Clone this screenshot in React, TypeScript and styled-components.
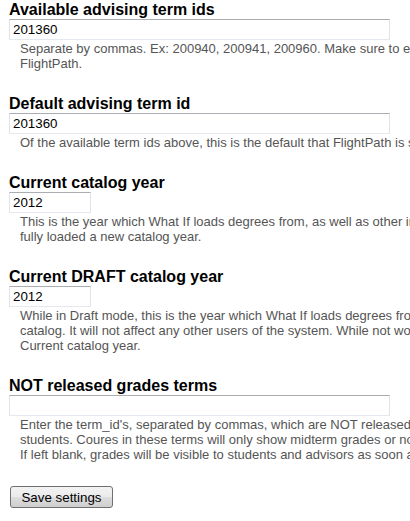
import React from "react";
import styled, { createGlobalStyle } from "styled-components";

const Global = createGlobalStyle`
  html, body { margin: 0; padding: 0; background: #fff; overflow: hidden; }
  body { font-family: "Liberation Sans", Arial, sans-serif; }
`;

const Page = styled.form`
  padding: 0 0 0 9px;
  width: 900px;
`;

const FormItem = styled.div`
  margin-bottom: 23px;
`;

const Label = styled.label`
  display: block;
  font-size: 16px;
  font-weight: bold;
  line-height: 19px;
  color: #000;
`;

const TextInput = styled.input<{ $w: number }>`
  display: block;
  box-sizing: border-box;
  width: ${(p) => p.$w}px;
  height: 21px;
  margin: 0;
  padding: 0 3px;
  border: 1px solid #e2e3ea;
  border-top-color: #abadb3;
  border-bottom-color: #e3e9ef;
  font-family: "Liberation Sans", Arial, sans-serif;
  font-size: 13.33px;
  color: #000;
  background: #fff;
  outline: none;
`;

const Description = styled.div`
  margin: 1px 0 0 11px;
  font-size: 13px;
  line-height: 15px;
  color: #555;
  white-space: nowrap;
`;

const SaveButton = styled.button`
  box-sizing: border-box;
  margin: 1px 0 0 1px;
  width: 103px;
  height: 22px;
  padding: 0;
  border: 1px solid #707070;
  border-radius: 3px;
  background: linear-gradient(#f2f2f2 0%, #ebebeb 50%, #dddddd 51%, #cfcfcf 100%);
  font-family: "Liberation Sans", Arial, sans-serif;
  font-size: 13.33px;
  color: #000;
`;

type Field = { label: string; value: string; width: number; lines: string[] };

const fields: Field[] = [
  {
    label: "Available advising term ids",
    value: "201360",
    width: 381,
    lines: [
      "Separate by commas. Ex: 200940, 200941, 200960. Make sure to enter them in order. These are the terms",
      "FlightPath.",
    ],
  },
  {
    label: "Default advising term id",
    value: "201360",
    width: 381,
    lines: ["Of the available term ids above, this is the default that FlightPath is set to."],
  },
  {
    label: "Current catalog year",
    value: "2012",
    width: 82,
    lines: [
      "This is the year which What If loads degrees from, as well as other important functions. Only change this once you have",
      "fully loaded a new catalog year.",
    ],
  },
  {
    label: "Current DRAFT catalog year",
    value: "2012",
    width: 82,
    lines: [
      "While in Draft mode, this is the year which What If loads degrees from, as well as other functions, for the draft",
      "catalog. It will not affect any other users of the system. While not working on a new catalog, this should match the",
      "Current catalog year.",
    ],
  },
  {
    label: "NOT released grades terms",
    value: "",
    width: 381,
    lines: [
      "Enter the term_id's, separated by commas, which are NOT released for viewing by advisors and",
      "students. Coures in these terms will only show midterm grades or no grades at all.",
      "If left blank, grades will be visible to students and advisors as soon as they are loaded.",
    ],
  },
];

export default function App() {
  return (
    <>
      <Global />
      <Page onSubmit={(e) => e.preventDefault()}>
        {fields.map((f) => (
          <FormItem key={f.label}>
            <Label>{f.label}</Label>
            <TextInput $w={f.width} defaultValue={f.value} />
            <Description>
              {f.lines.map((l, i) => (
                <React.Fragment key={i}>
                  {i > 0 && <br />}
                  {l}
                </React.Fragment>
              ))}
            </Description>
          </FormItem>
        ))}
        <SaveButton type="submit">Save settings</SaveButton>
      </Page>
    </>
  );
}
